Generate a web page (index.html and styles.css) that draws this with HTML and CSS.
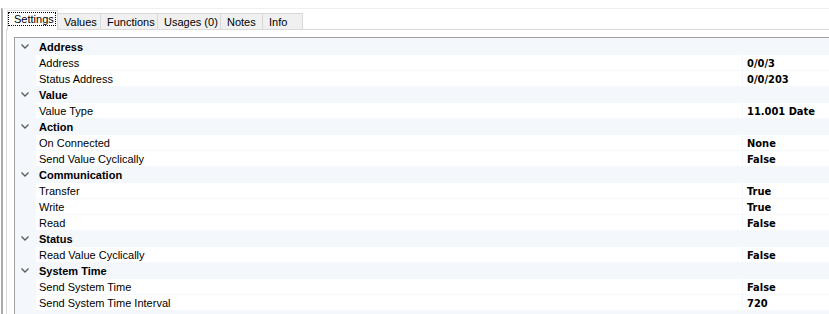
FILE: index.html
```html
<!DOCTYPE html>
<html>
<head>
<meta charset="UTF-8">
<title>Properties</title>
<link rel="stylesheet" href="styles.css">
</head>
<body>
<div class="frame">
	<div class="tabs">
		<div class="tab selected w-settings"><span class="focus">Settings</span></div>
		<div class="tab w-values">Values</div>
		<div class="tab w-functions">Functions</div>
		<div class="tab w-usages">Usages (0)</div>
		<div class="tab w-notes">Notes</div>
		<div class="tab w-info">Info</div>
	</div>
	<div class="panel">
		<div class="grid">
			<div class="row cat"><div class="gutter"><svg class="chev" width="8" height="5" viewBox="0 0 8 5"><polyline points="0.5,0.5 4,4 7.5,0.5" /></svg></div><div class="name">Address</div></div>
			<div class="row"><div class="gutter"></div><div class="name">Address</div><div class="value">0/0/3</div></div>
			<div class="row"><div class="gutter"></div><div class="name">Status Address</div><div class="value">0/0/203</div></div>

			<div class="row cat"><div class="gutter"><svg class="chev" width="8" height="5" viewBox="0 0 8 5"><polyline points="0.5,0.5 4,4 7.5,0.5" /></svg></div><div class="name">Value</div></div>
			<div class="row"><div class="gutter"></div><div class="name">Value Type</div><div class="value">11.001 Date</div></div>

			<div class="row cat"><div class="gutter"><svg class="chev" width="8" height="5" viewBox="0 0 8 5"><polyline points="0.5,0.5 4,4 7.5,0.5" /></svg></div><div class="name">Action</div></div>
			<div class="row"><div class="gutter"></div><div class="name">On Connected</div><div class="value">None</div></div>
			<div class="row"><div class="gutter"></div><div class="name">Send Value Cyclically</div><div class="value">False</div></div>

			<div class="row cat"><div class="gutter"><svg class="chev" width="8" height="5" viewBox="0 0 8 5"><polyline points="0.5,0.5 4,4 7.5,0.5" /></svg></div><div class="name">Communication</div></div>
			<div class="row"><div class="gutter"></div><div class="name">Transfer</div><div class="value">True</div></div>
			<div class="row"><div class="gutter"></div><div class="name">Write</div><div class="value">True</div></div>
			<div class="row"><div class="gutter"></div><div class="name">Read</div><div class="value">False</div></div>

			<div class="row cat"><div class="gutter"><svg class="chev" width="8" height="5" viewBox="0 0 8 5"><polyline points="0.5,0.5 4,4 7.5,0.5" /></svg></div><div class="name">Status</div></div>
			<div class="row"><div class="gutter"></div><div class="name">Read Value Cyclically</div><div class="value">False</div></div>

			<div class="row cat"><div class="gutter"><svg class="chev" width="8" height="5" viewBox="0 0 8 5"><polyline points="0.5,0.5 4,4 7.5,0.5" /></svg></div><div class="name">System Time</div></div>
			<div class="row"><div class="gutter"></div><div class="name">Send System Time</div><div class="value">False</div></div>
			<div class="row"><div class="gutter"></div><div class="name">Send System Time Interval</div><div class="value">720</div></div>
		</div>
	</div>
</div>
</body>
</html>
```
FILE: styles.css
```css
html, body {
	margin: 0;
	height: 100%;
	overflow: hidden;
	background: #fff;
}

body {
	font-family: "Liberation Sans", Arial, sans-serif;
	font-size: 11px;
	color: #000;
}

.frame {
	margin: 8px 0 0 1px;
	border-left: 2px solid #ababab;
	border-top: 1px solid #f0f0f0;
	padding: 1px 0 0 3px;
	height: 100%;
	box-sizing: border-box;
	display: flex;
	flex-direction: column;
}

/* tab strip */
.tabs {
	display: flex;
	align-items: flex-end;
	height: 19px;
	margin-left: 1px;
}

.tab {
	box-sizing: border-box;
	height: 16px;
	padding: 1px 0 0 6px;
	line-height: 15px;
	background: #f0f0f0;
	border: 1px solid #d9d9d9;
	border-bottom: none;
	margin-left: -1px;
	white-space: nowrap;
}

.tab.selected {
	position: relative;
	z-index: 1;
	height: 20px;
	margin-bottom: -1px;
	margin-left: 0;
	padding: 1px 0 0 0;
	background: #fff;
}

.focus {
	display: block;
	box-sizing: border-box;
	width: 48px;
	height: 14px;
	line-height: 12px;
	padding-left: 5px;
	border: 1px dotted #000;
}

.w-settings { width: 51px; }
.w-values { width: 44px; }
.w-functions { width: 58px; }
.w-usages { width: 64px; }
.w-notes { width: 43px; }
.w-info { width: 41px; }

/* property grid */
.panel {
	flex: 1;
	border-top: 1px solid #d9d9d9;
	border-left: 1px solid #d9d9d9;
	padding: 7px 0 0 7px;
	display: flex;
	flex-direction: column;
}

.grid {
	flex: 1;
	background: #f4f7fc;
	border-top: 1px solid #a0a0a0;
	border-left: 1px solid #a0a0a0;
}

.row {
	display: flex;
	height: 16px;
	padding-top: 1px;
	box-sizing: border-box;
	line-height: 17px;
}

.gutter {
	width: 21px;
	flex: none;
	display: flex;
	align-items: center;
	padding-left: 6px;
	box-sizing: border-box;
}

.chev polyline {
	fill: none;
	stroke: #5a5a5a;
	stroke-width: 1.3;
}

.name {
	width: 706px;
	flex: none;
	padding-left: 3px;
	box-sizing: border-box;
	background: #fff;
	white-space: nowrap;
	overflow: hidden;
}

.cat .name {
	background: none;
	font-weight: bold;
}

.value {
	flex: 1;
	margin-left: 1px;
	padding-left: 4px;
	background: #fff;
	font-family: "DejaVu Sans Condensed", "DejaVu Sans", sans-serif;
	font-stretch: condensed;
	font-weight: bold;
	white-space: nowrap;
	overflow: hidden;
}
```
